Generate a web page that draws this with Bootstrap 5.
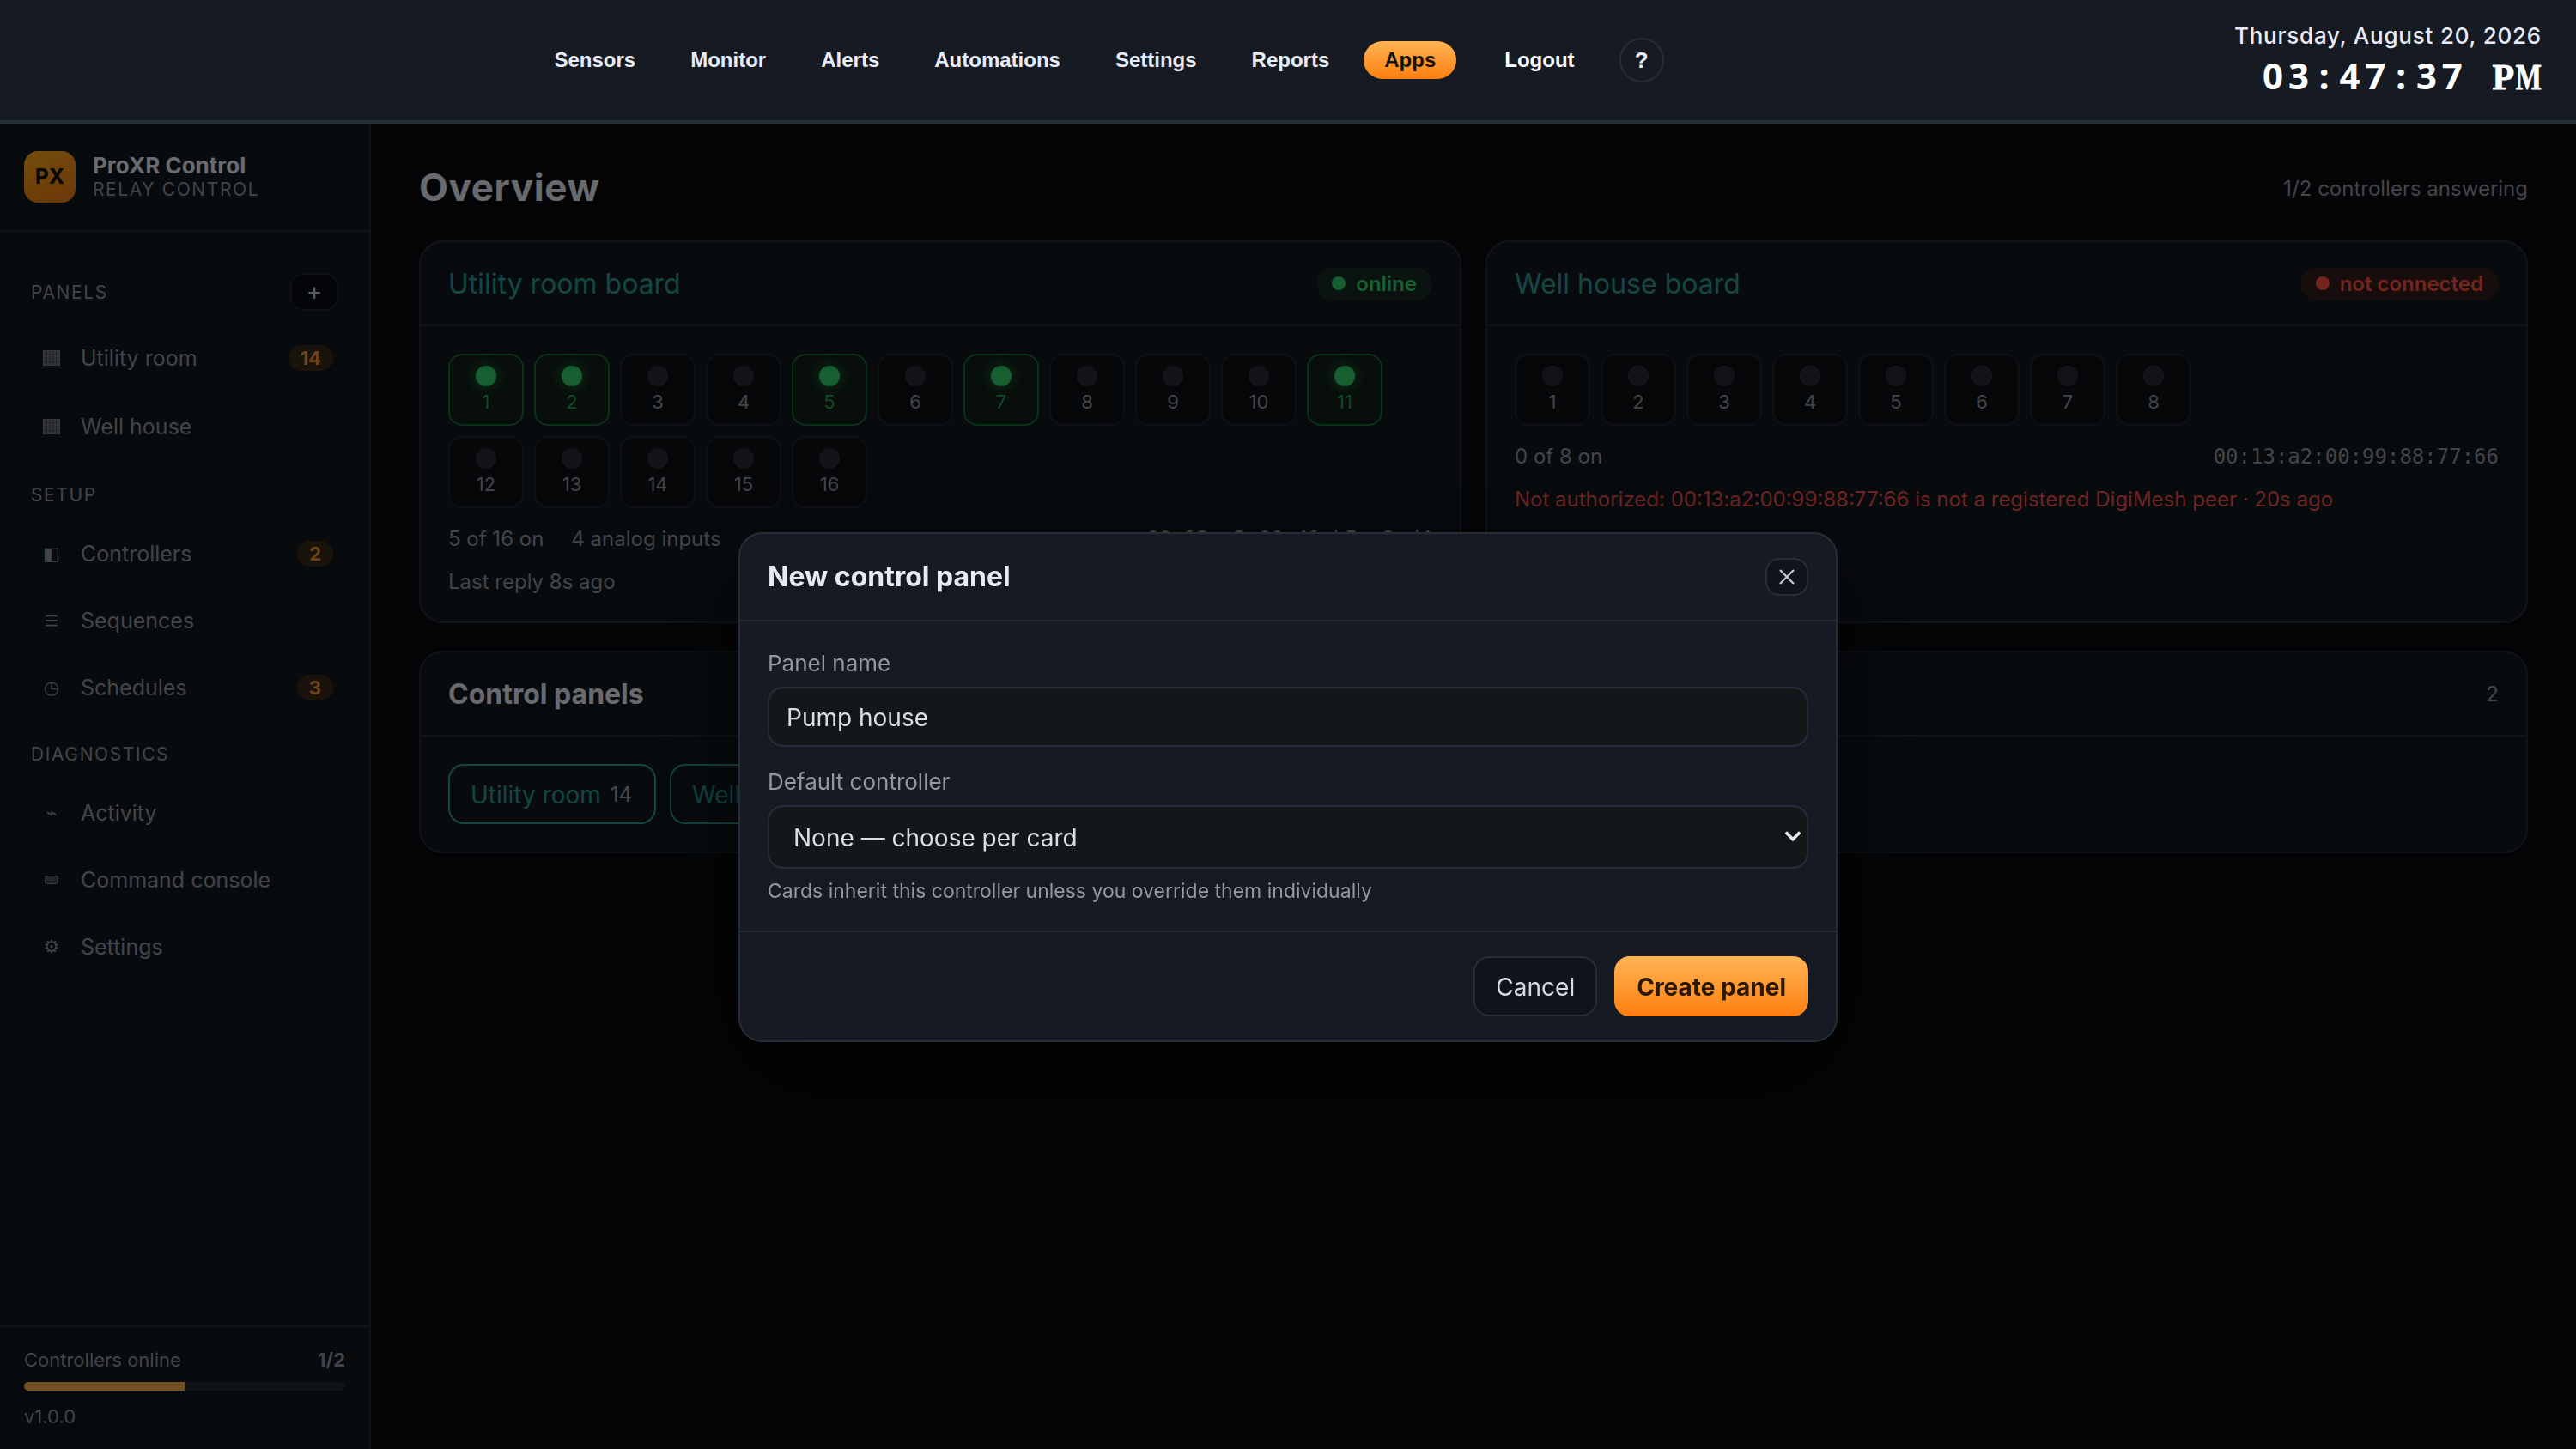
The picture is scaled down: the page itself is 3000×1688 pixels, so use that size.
<!DOCTYPE html>
<html lang="en">
<head>
<meta charset="utf-8">
<meta name="viewport" content="width=device-width, initial-scale=1">
<title>ProXR Control</title>
<link href="https://cdn.jsdelivr.net/npm/bootstrap@5.3.0/dist/css/bootstrap.min.css" rel="stylesheet">
<style>
  :root { --line:#252e36; --panel:#12191f; --ink:#e8eaf2; --muted:#9298a2; --amber:#ffb454; --teal:#2d9d97; --green:#34d36d; --red:#ff5341; }
  html, body { height:100%; }
  body { background:#090b0e; color:var(--ink); font-family:Inter, sans-serif; font-size:24px; line-height:28px; overflow:hidden; }

  /* top bar */
  .topbar { height:144px; background:#161a22; border-bottom:4px solid var(--line); padding-right:40px; }
  .topnav { margin-left:621.5px; gap:16px; }
  .topnav a { font:bold 24px/28px "Liberation Sans", Arial, sans-serif; color:#e9ebf7; padding:8px 24px; border-radius:22px; text-decoration:none; }
  .topnav a.on { background:linear-gradient(#ffb454,#ff7f11); color:#14120e; }
  .topnav a.out { color:#fff; margin-left:16px; }
  .topnav .help { width:52px; height:52px; border:2px solid var(--line); border-radius:50%; font:bold 26px/1 "Liberation Sans", Arial, sans-serif; margin-left:12px; }
  .today { font-size:26px; font-weight:500; letter-spacing:.78px; color:#e9ebf7; line-height:32px; padding-top:1px; }
  .clock { font:bold 42px/52px "Noto Sans", sans-serif; color:#fff; margin-top:4px; white-space:pre; }
  .clock i { font-style:normal; display:inline-block; width:29.8px; text-align:center; }
  .clock .ap { font-family:"Liberation Serif", serif; -webkit-text-stroke:.8px #fff; }
  .clock .wide { transform:scaleX(.76); text-indent:-5px; }

  /* sidebar */
  .side { width:432px; background:var(--panel); border-right:2px solid var(--line); }
  .brandbar { padding:32px 28px; gap:20px; border-bottom:2px solid var(--line); }
  .logo { width:60px; height:60px; border-radius:16px; background:linear-gradient(160deg,#ffab20,#f07a12); color:#17120a; font-weight:800; font-size:24px; }
  .brandname { font-weight:700; font-size:26px; line-height:30px; margin-top:-1px; }
  .tagline { font-size:21px; line-height:26px; letter-spacing:1.6px; color:var(--muted); }
  .sect { padding:0 36px; font-size:21px; letter-spacing:1.6px; color:var(--muted); }
  .sect > span:first-child, .sect.solo { padding-top:1px; margin-bottom:-1px; }
  .addbtn { width:56px; height:44px; border:2px solid #20242c; border-radius:16px; background:#0b0d13; font-size:28px; letter-spacing:0; color:#d0d2da; padding-bottom:3px; }
  .navrow { height:78px; padding:0 42px 0 46px; color:var(--muted); font-size:25px; }
  .navrow.tall { height:80px; }
  .navrow .ico { width:28px; text-align:center; font-family:"DejaVu Sans", sans-serif; font-size:21px; }
  .navrow .ico svg { display:block; margin:0 auto; }
  .navrow .lbl { margin-left:20px; }
  .pill { background:#3a2c1a; color:#f09a3c; font-size:22px; font-weight:700; line-height:30px; padding:0 14px; border-radius:15px; }
  .sidefoot { border-top:2px solid var(--line); height:144px; padding:24px 28px 0; font-size:22px; color:var(--muted); }
  .meter { height:10px; border-radius:5px; background:#242a32; margin:12px 0 16px; }
  .meter div { background:var(--amber); }

  /* content */
  .stage { padding:46px 56px; }
  .stage h1 { font-size:44px; line-height:56px; font-weight:700; letter-spacing:.6px; margin:0; }
  .dim { color:var(--muted); }
  .boards { gap:28px; margin-top:34px; }
  .box { background:var(--panel); border:2px solid var(--line); border-radius:28px; color:inherit; }
  .boxhead { height:98px; padding:2px 32px 0; border-bottom:2px solid var(--line); font-size:32px; }
  .boxbody { padding:32px; }
  .teal { color:var(--teal); }
  .state { font-size:24px; font-weight:600; line-height:38px; border-radius:19px; padding:0 18px; gap:12px; }
  .state::before { content:""; width:16px; height:16px; border-radius:50%; background:currentColor; margin-bottom:2px; }
  .state.ok { color:var(--green); background:#182a22; }
  .state.bad { color:var(--red); background:#361d1e; }
  .relays { gap:12px; margin-bottom:22px; }
  .relay { width:88px; height:84px; border:2px solid #21262d; border-radius:16px; background:#0f1115; font-size:22px; line-height:28px; padding-top:12px; color:var(--muted); }
  .relay::before { content:""; width:24px; height:24px; border-radius:50%; background:#272b36; border:1px solid #313640; margin-bottom:4px; }
  .relay.hot { border-color:#1c6a3b; background:#132019; color:#26a052; }
  .relay.hot::before { background:var(--green); border:0; box-shadow:0 0 16px rgba(52,211,109,.5); }
  .mac { font-family:"DejaVu Sans Mono", monospace; font-size:24px; }
  .err { color:#f0504e; }
  .meta2 { margin-top:22px; }
  .chip { height:70px; border:2px solid var(--teal); border-radius:18px; color:var(--teal); font-size:28px; padding:2px 26px 0 24px; gap:11px; text-decoration:none; }
  .chip span { font-size:24px; color:#a0a4ac; }

  /* dialog */
  .veil { position:fixed; inset:144px 0 0 0; background:rgba(0,0,0,.55); padding-top:2px; }
  .dlg { width:1280px; background:#161a22; border:2px solid var(--line); border-radius:28px; box-shadow:0 40px 120px rgba(0,0,0,.6); color:var(--ink); }
  .dlghead { height:102px; padding:0 32px; border-bottom:2px solid var(--line); font-size:32px; font-weight:700; }
  .xbtn { width:50px; height:44px; border:2px solid var(--line); border-radius:16px; background:#10131b; color:#ccced6; }
  .dlgbody { height:360px; padding:35px 32px 0; }
  .dlgbody label { display:block; line-height:28px; font-size:26px; margin-bottom:13px; color:#9298a2; }
  .dlgbody .form-control { height:70px; border:2px solid var(--line); border-radius:18px; background:#12171a; color:#dcdee2; font-size:28px; padding:2px 20px 0; }
  .dlgbody .form-select { height:74px; border:2px solid var(--line); border-radius:18px; background:#12171a; color:#dcdee2; font-size:28px; line-height:40px; padding:2px 28px 0; }
  .caret { position:absolute; right:8px; top:29px; }
  .hint { font-size:23px; color:#9298a2; margin-top:12px; line-height:28px; }
  .dlgfoot { padding:28px 32px; gap:20px; border-top:2px solid var(--line); }
  .dlgfoot .btn { height:70px; border-radius:18px; font-size:28px; padding:1px 24px 0; line-height:66px; border:2px solid var(--line); background:#10131b; color:#d8dae2; }
  .dlgfoot .btn.go { background:linear-gradient(#ffb454,#ff7f11) border-box; border-color:transparent; color:#2a1704; font-weight:700; }
</style>
</head>
<body class="d-flex flex-column">
<header class="topbar d-flex align-items-center justify-content-between flex-shrink-0">
  <nav class="topnav d-flex align-items-center">
    <a href="#">Sensors</a><a href="#">Monitor</a><a href="#">Alerts</a><a href="#">Automations</a><a href="#">Settings</a><a href="#">Reports</a><a href="#" class="on">Apps</a><a href="#" class="out">Logout</a>
    <span class="help d-flex align-items-center justify-content-center">?</span>
  </nav>
  <div class="text-end">
    <div class="today">Thursday, August 20, 2026</div>
    <div class="clock"><i>0</i><i>3</i><i>:</i><i>4</i><i>7</i><i>:</i><i>3</i><i>7</i><i> </i><i class="ap">P</i><i class="ap wide">M</i></div>
  </div>
</header>

<div class="d-flex flex-grow-1">
  <aside class="side d-flex flex-column flex-shrink-0">
    <div class="brandbar d-flex align-items-center">
      <div class="logo d-flex align-items-center justify-content-center">PX</div>
      <div><div class="brandname">ProXR Control</div><div class="tagline">RELAY CONTROL</div></div>
    </div>
    <div class="sect d-flex align-items-center justify-content-between mt-5"><span>PANELS</span><span class="addbtn d-flex align-items-center justify-content-center">+</span></div>
    <div class="d-flex flex-column" style="margin-top:15px">
      <div class="navrow tall d-flex align-items-center"><span class="ico"><svg width="20" height="18" viewBox="0 0 20 18"><path fill="#737982" d="M0 0h20v18H0z"/><path stroke="#4c525a" stroke-width="1.2" d="M4 1v16M8 1v16M12 1v16M16 1v16M1 4.5h18M1 9h18M1 13.5h18"/></svg></span><span class="lbl">Utility room</span><span class="pill ms-auto">14</span></div>
      <div class="navrow tall d-flex align-items-center"><span class="ico"><svg width="20" height="18" viewBox="0 0 20 18"><path fill="#737982" d="M0 0h20v18H0z"/><path stroke="#4c525a" stroke-width="1.2" d="M4 1v16M8 1v16M12 1v16M16 1v16M1 4.5h18M1 9h18M1 13.5h18"/></svg></span><span class="lbl">Well house</span></div>
    </div>
    <div class="sect solo" style="margin-top:25px">SETUP</div>
    <div class="d-flex flex-column" style="margin-top:16px">
      <div class="navrow d-flex align-items-center"><span class="ico">◧</span><span class="lbl">Controllers</span><span class="pill ms-auto">2</span></div>
      <div class="navrow d-flex align-items-center"><span class="ico"><svg width="14" height="14" viewBox="0 0 14 14" stroke="currentColor" stroke-width="1.8"><path d="M0 1.4h14M0 7h14M0 12.6h14"/></svg></span><span class="lbl">Sequences</span></div>
      <div class="navrow d-flex align-items-center"><span class="ico">◷</span><span class="lbl">Schedules</span><span class="pill ms-auto">3</span></div>
    </div>
    <div class="sect solo" style="margin-top:24px">DIAGNOSTICS</div>
    <div class="d-flex flex-column" style="margin-top:16px">
      <div class="navrow d-flex align-items-center"><span class="ico">⌁</span><span class="lbl">Activity</span></div>
      <div class="navrow d-flex align-items-center"><span class="ico"><svg width="16" height="10" viewBox="0 0 16 10" fill="none" stroke="#7c828b"><rect x=".6" y=".6" width="14.8" height="8.8" rx="1.5" stroke-width="1.2" fill="#3c4249"/><path stroke-width="1.3" stroke-dasharray="1.6 1" d="M2.4 3.2h11.4M2.4 5.2h11.4"/><path stroke-width="1.2" d="M4.5 7.4h7"/></svg></span><span class="lbl">Command console</span></div>
      <div class="navrow d-flex align-items-center"><span class="ico">⚙</span><span class="lbl">Settings</span></div>
    </div>
    <div class="sidefoot mt-auto">
      <div class="d-flex justify-content-between"><span>Controllers online</span><b>1/2</b></div>
      <div class="meter overflow-hidden"><div class="h-100" style="width:50%"></div></div>
      <div>v1.0.0</div>
    </div>
  </aside>

  <main class="stage flex-grow-1">
    <div class="d-flex justify-content-between align-items-center"><h1>Overview</h1><span class="dim pt-1">1/2 controllers answering</span></div>
    <div class="boards d-flex">
      <section class="box flex-fill w-50">
        <div class="boxhead d-flex align-items-center justify-content-between"><span class="teal">Utility room board</span><span class="state ok d-flex align-items-center">online</span></div>
        <div class="boxbody">
          <div class="relays d-flex flex-wrap">
            <div class="relay hot d-flex flex-column align-items-center">1</div><div class="relay hot d-flex flex-column align-items-center">2</div><div class="relay d-flex flex-column align-items-center">3</div><div class="relay d-flex flex-column align-items-center">4</div><div class="relay hot d-flex flex-column align-items-center">5</div><div class="relay d-flex flex-column align-items-center">6</div><div class="relay hot d-flex flex-column align-items-center">7</div><div class="relay d-flex flex-column align-items-center">8</div><div class="relay d-flex flex-column align-items-center">9</div><div class="relay d-flex flex-column align-items-center">10</div><div class="relay hot d-flex flex-column align-items-center">11</div><div class="relay d-flex flex-column align-items-center">12</div><div class="relay d-flex flex-column align-items-center">13</div><div class="relay d-flex flex-column align-items-center">14</div><div class="relay d-flex flex-column align-items-center">15</div><div class="relay d-flex flex-column align-items-center">16</div>
          </div>
          <div class="d-flex dim"><span style="margin-right:32px">5 of 16 on</span><span>4 analog inputs</span><span class="mac ms-auto">00:13:a2:00:41:b5:c2:d4</span></div>
          <div class="dim meta2">Last reply 8s ago</div>
        </div>
      </section>
      <section class="box flex-fill w-50">
        <div class="boxhead d-flex align-items-center justify-content-between"><span class="teal">Well house board</span><span class="state bad d-flex align-items-center">not connected</span></div>
        <div class="boxbody">
          <div class="relays d-flex flex-wrap">
            <div class="relay d-flex flex-column align-items-center">1</div><div class="relay d-flex flex-column align-items-center">2</div><div class="relay d-flex flex-column align-items-center">3</div><div class="relay d-flex flex-column align-items-center">4</div><div class="relay d-flex flex-column align-items-center">5</div><div class="relay d-flex flex-column align-items-center">6</div><div class="relay d-flex flex-column align-items-center">7</div><div class="relay d-flex flex-column align-items-center">8</div>
          </div>
          <div class="d-flex dim"><span>0 of 8 on</span><span class="mac ms-auto">00:13:a2:00:99:88:77:66</span></div>
          <div class="err meta2">Not authorized: 00:13:a2:00:99:88:77:66 is not a registered DigiMesh peer · 20s ago</div>
        </div>
      </section>
    </div>
    <section class="box" style="margin-top:32px">
      <div class="boxhead d-flex align-items-center justify-content-between"><span class="fw-bold">Control panels</span><span class="dim" style="font-size:24px">2</span></div>
      <div class="boxbody d-flex" style="gap:16px">
        <a class="chip d-flex align-items-center" href="#">Utility room<span>14</span></a>
        <a class="chip d-flex align-items-center" href="#">Well house</a>
      </div>
    </section>
  </main>
</div>

<div class="veil d-flex align-items-center justify-content-center">
  <div class="dlg" role="dialog" aria-label="New control panel">
    <div class="dlghead d-flex align-items-center justify-content-between">New control panel
      <button class="xbtn d-flex align-items-center justify-content-center p-0" aria-label="Close"><svg width="18" height="18" viewBox="0 0 18 18" fill="none" stroke="currentColor" stroke-width="2.2"><path d="M1 1l16 16M17 1L1 17"/></svg></button>
    </div>
    <div class="dlgbody">
      <label for="pn">Panel name</label>
      <input id="pn" class="form-control" value="Pump house">
      <label for="dc" style="margin-top:27px">Default controller</label>
      <div class="position-relative">
        <select id="dc" class="form-select"><option>None — choose per card</option></select>
        <svg class="caret" width="20" height="15" viewBox="0 0 20 15" fill="none" stroke="#e8eaee" stroke-width="3.6"><path d="M1.8 2.5L10 10.7l8.2-8.2"/></svg>
      </div>
      <div class="hint">Cards inherit this controller unless you override them individually</div>
    </div>
    <div class="dlgfoot d-flex justify-content-end">
      <button class="btn">Cancel</button><button class="btn go">Create panel</button>
    </div>
  </div>
</div>
<script src="https://cdn.jsdelivr.net/npm/bootstrap@5.3.0/dist/js/bootstrap.bundle.min.js"></script>
</body>
</html>
